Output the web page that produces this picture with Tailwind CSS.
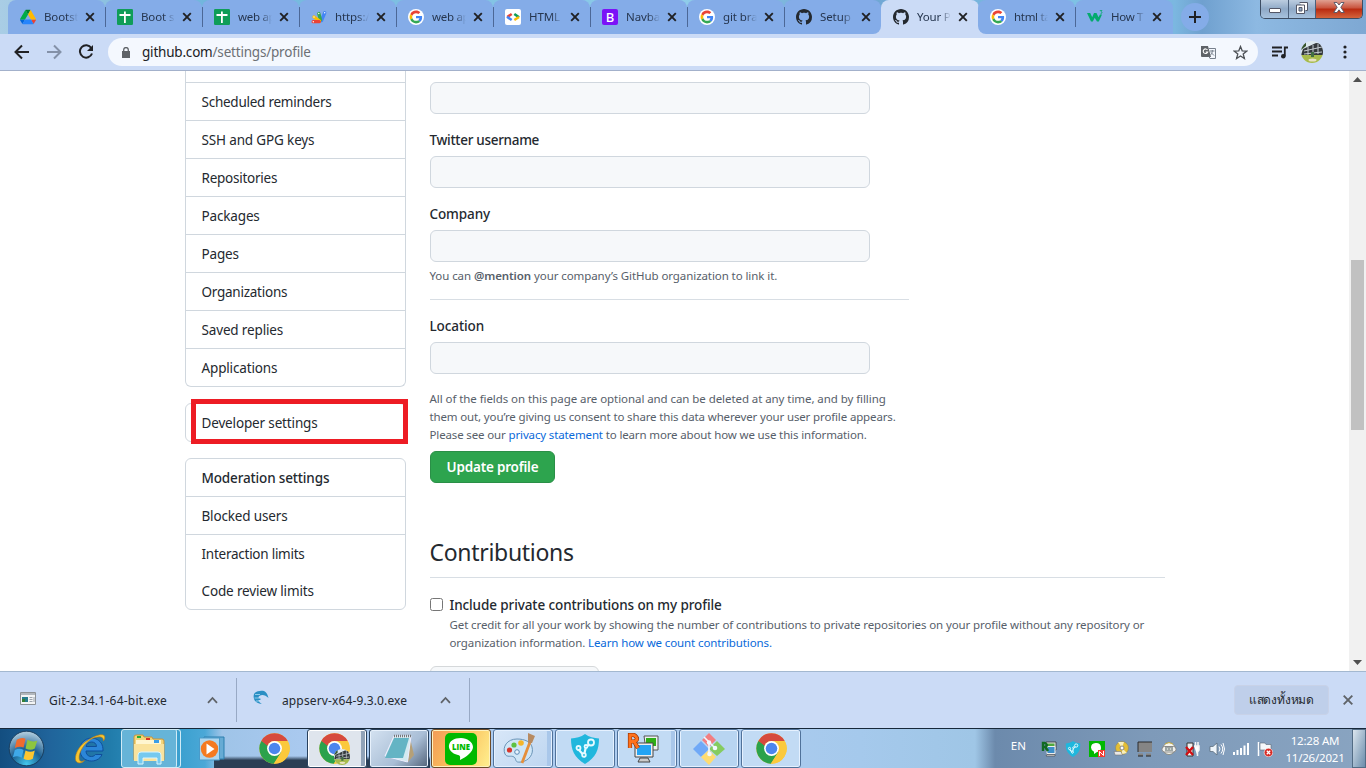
<!DOCTYPE html>
<html lang="en">
<head>
<meta charset="utf-8">
<title>Your Profile</title>
<script src="https://cdn.jsdelivr.net/npm/@tailwindcss/browser@4"></script>
</head>
<body class="w-[1366px] h-[768px] overflow-hidden flex flex-col bg-white font-['Noto_Sans','Open_Sans',sans-serif] text-[#24292f]">

<svg class="absolute size-0">
  <defs>
    <symbol id="x" viewBox="0 0 10 10"><path d="M1.2 1.2l7.6 7.6M8.8 1.2L1.200 8.8" stroke="#202124" stroke-width="1.9" fill="none"/></symbol>
    <symbol id="drive" viewBox="0 0 87.300 78"><path d="m6.600 66.850 3.850 6.650c.8 1.400 1.950 2.500 3.300 3.300l13.750-23.800h-27.500c0 1.550.4 3.100 1.200 4.500z" fill="#0066da"/><path d="m43.650 25-13.750-23.800c-1.350.8-2.500 1.900-3.300 3.300l-25.400 44a9 9 0 0 0-1.200 4.500h27.500z" fill="#00ac47"/><path d="m73.550 76.800c1.350-.8 2.500-1.900 3.300-3.300l1.600-2.750 7.650-13.250c.8-1.400 1.200-2.950 1.200-4.500h-27.500l5.850 11.500z" fill="#ea4335"/><path d="m43.650 25 13.750-23.800c-1.350-.8-2.900-1.200-4.500-1.200h-18.500c-1.600 0-3.150.45-4.500 1.200z" fill="#00832d"/><path d="m59.800 53h-32.300l-13.750 23.800c1.350.8 2.900 1.200 4.500 1.200h50.800c1.600 0 3.150-.45 4.500-1.200z" fill="#2684fc"/><path d="m73.400 26.500-12.700-22c-.8-1.400-1.950-2.500-3.300-3.300l-13.750 23.800 16.150 28h27.450c0-1.550-.4-3.100-1.200-4.500z" fill="#ffba00"/></symbol>
    <symbol id="sheet" viewBox="0 0 16 16"><rect width="16" height="16" rx="1.200" fill="#0f9d58"/><path d="M2.500 6h11M7.900 2.500v11.500" stroke="#fff" stroke-width="1.800"/></symbol>
    <symbol id="script" viewBox="0 0 16 16"><g stroke-linecap="round" stroke-width="3.300"><path d="M10.500 11.500L13.700 3.800" stroke="#4285f4"/><path d="M7.800 4.500L9.500 11" stroke="#34a853"/><path d="M3 8L8.500 12" stroke="#fbbc04"/><path d="M2.200 12.700h6" stroke="#ea4335"/></g><circle cx="2.300" cy="12.700" r=".7" fill="#fff"/><circle cx="3" cy="8" r=".7" fill="#fff"/><circle cx="7.800" cy="4.500" r=".7" fill="#fff"/><circle cx="13.700" cy="3.800" r=".7" fill="#fff"/></symbol>
    <symbol id="google" viewBox="-6 -6 60 60"><circle cx="24" cy="24" r="30" fill="#fff"/><path fill="#EA4335" d="M24 9.500c3.540 0 6.710 1.220 9.210 3.600l6.850-6.850C35.900 2.380 30.470 0 24 0 14.620 0 6.510 5.380 2.560 13.220l7.980 6.190C12.430 13.720 17.740 9.500 24 9.500z"/><path fill="#4285F4" d="M46.980 24.550c0-1.570-.15-3.090-.38-4.550H24v9.020h12.940c-.58 2.960-2.260 5.480-4.780 7.180l7.730 6c4.510-4.180 7.090-10.360 7.090-17.650z"/><path fill="#FBBC05" d="M10.530 28.590c-.48-1.450-.76-2.990-.76-4.590s.27-3.140.76-4.590l-7.980-6.190C.92 16.460 0 20.120 0 24c0 3.880.92 7.540 2.560 10.780l7.970-6.190z"/><path fill="#34A853" d="M24 48c6.480 0 11.930-2.130 15.890-5.810l-7.730-6c-2.150 1.450-4.920 2.300-8.160 2.300-6.260 0-11.570-4.220-13.470-9.910l-7.980 6.190C6.510 42.620 14.620 48 24 48z"/></symbol>
    <symbol id="code" viewBox="0 0 16 16"><rect width="16" height="16" rx="2" fill="#fff"/><g fill="none" stroke-width="2.600"><path d="M6.700 5L2.200 8" stroke="#ea4335"/><path d="M2 7.800L6.700 11" stroke="#4285f4"/><path d="M9.300 5L14 8.200" stroke="#0f9d58"/><path d="M14 8L9.300 11" stroke="#fbbc04"/></g></symbol>
    <symbol id="github" viewBox="0 0 16 16"><path fill="#24292f" d="M8 0C3.580 0 0 3.580 0 8c0 3.540 2.290 6.530 5.470 7.590.4.070.55-.17.55-.38 0-.19-.01-.82-.01-1.490-2.010.37-2.530-.49-2.690-.94-.09-.23-.48-.94-.82-1.130-.28-.15-.68-.52-.01-.53.63-.01 1.080.58 1.230.82.72 1.210 1.870.87 2.330.66.070-.52.280-.87.510-1.070-1.780-.2-3.640-.89-3.640-3.950 0-.87.310-1.590.820-2.150-.08-.2-.36-1.020.080-2.120 0 0 .67-.21 2.200.820.640-.18 1.320-.27 2-.27s1.360.09 2 .27c1.530-1.040 2.200-.82 2.200-.82.440 1.100.160 1.920.080 2.120.510.560.820 1.270.820 2.150 0 3.070-1.870 3.750-3.650 3.950.290.250.540.730.540 1.480 0 1.070-.01 1.930-.01 2.200 0 .210.150.460.550.380A8.010 8.010 0 0 0 16 8c0-4.420-3.580-8-8-8z"/></symbol>
    <symbol id="w3" viewBox="0 0 16 16"><path d="M0 4h3.200l2 4.300L7 4h2.500l2 4.300L13 5.500h2L11.800 12.500H10L7.700 8.800 5.800 12.500H4z" fill="#04aa6d"/><path d="M12.800 1.500h2.200l-1 1.200c1.500.2 1.300 2-.4 1.900" fill="none" stroke="#04aa6d" stroke-width=".8"/></symbol>
    <symbol id="chrome" viewBox="0 0 48 48"><circle cx="24" cy="24" r="23.500" fill="#fbc93c"/><path d="M3.600 12.300A23.500 23.500 0 0 0 23 47.500L34 30 24 24z" fill="#2ba24c"/><path d="M24 12.300h20.400A23.500 23.500 0 0 1 23 47.500L34.200 30z" fill="#fbc93c"/><path d="M3.600 12.300A23.500 23.500 0 0 1 44.400 12.300H24c-5 0-9 2.700-11 7.700z" fill="#d64a3e"/><path d="M3.600 12.300L13.900 30 24 24 13 20z" fill="#2ba24c"/><circle cx="24" cy="24" r="11.500" fill="#fff"/><circle cx="24" cy="24" r="9" fill="#4c86ee"/></symbol>
    <symbol id="school" viewBox="0 0 22 22"><rect width="22" height="22" fill="#dce8ee"/><path d="M0 9l5-4V0L0 2z" fill="#35532b"/><path d="M2 8l13-6 7 1v11H0z" fill="#34393c"/><path d="M3 10l18-4M3 13l18-2M7 6v8M12 4v9M17 3v10" stroke="#c4cbd0" stroke-width="1"/><path d="M0 14h22v8H0z" fill="#a7bb4b"/><path d="M10 11h3v5h-3z" fill="#426e42"/><ellipse cx="11.500" cy="19" rx="4" ry="1.500" fill="#e8e1c4"/></symbol>
    <symbol id="shield" viewBox="0 0 28 30"><path d="M14 0C10 3 5 4 0 4.500c0 11 3 19 14 25.500 11-6.500 14-14.500 14-25.500C23 4 18 3 14 0z" fill="#20b7dd"/><path d="M7 15l6 6.500 2-9 6-3" stroke="#e5faff" stroke-width="2.200" fill="none"/><g fill="#20b7dd" stroke="#e5faff" stroke-width="1.800"><circle cx="7.500" cy="14" r="2"/><circle cx="20" cy="8.500" r="3"/><circle cx="15" cy="12.500" r="1.500"/><circle cx="13" cy="21" r="1.800"/></g></symbol>
    <symbol id="rdp" viewBox="0 0 32 32"><path d="M17 4h14v14H19z" fill="#edf1f0" stroke="#555"/><path d="M19 6h10v8H19z" fill="#2fae17"/><path d="M8 11h18v14H8z" fill="#eee" stroke="#444"/><path d="M10 13h14v10H10z" fill="#24a4f4"/><path d="M13 26h8l2 4H11z" fill="#ccc" stroke="#444"/><path d="M3 16V3h4q6 4 0 6.500H4M7 9.500l4 6.500" stroke="#8d2c05" stroke-width="4.200" fill="none"/><path d="M3 16V3h4q6 4 0 6.500H4M7 9.500l4 6.500" stroke="#ff721c" stroke-width="3" fill="none"/></symbol>
  </defs>
</svg>

<!-- Tab strip -->
<header class="h-[34px] shrink-0 flex pl-2 bg-[linear-gradient(#cbdbf6,#cbdbf6),linear-gradient(90deg,#a9cde5_0,#71b6dd_15%,#8fcdea_50%,#6fa5d3_63%,#7fc4e6_80%,#7bb7e0_86%,#6fa0cf_88%,#8db9e2_92%,#7ea8d3_100%)] bg-[length:116px_10px,100%_100%] bg-[position:871px_24px,0_0] bg-no-repeat text-[11.5px] text-[#26364f] tracking-[-0.1px]">
  <div class="w-[97px] pl-3 pr-[10px] flex items-center bg-[#84ace8] rounded-t-lg"><svg class="size-4 shrink-0"><use href="#drive"/></svg><span class="ml-2 w-[34px] overflow-hidden whitespace-nowrap [mask-image:linear-gradient(90deg,#000_65%,transparent)]">Bootst</span><svg class="size-[10px] ml-auto"><use href="#x"/></svg></div>
  <div class="w-[97px] pl-3 pr-[10px] flex items-center bg-[#84ace8] rounded-t-lg bg-[linear-gradient(#4c6897,#4c6897)] bg-[length:1px_20px] bg-no-repeat bg-[position:0_7px]"><svg class="size-4 shrink-0"><use href="#sheet"/></svg><span class="ml-2 w-[34px] overflow-hidden whitespace-nowrap [mask-image:linear-gradient(90deg,#000_65%,transparent)]">Boot s</span><svg class="size-[10px] ml-auto"><use href="#x"/></svg></div>
  <div class="w-[97px] pl-3 pr-[10px] flex items-center bg-[#84ace8] rounded-t-lg bg-[linear-gradient(#4c6897,#4c6897)] bg-[length:1px_20px] bg-no-repeat bg-[position:0_7px]"><svg class="size-4 shrink-0"><use href="#sheet"/></svg><span class="ml-2 w-[34px] overflow-hidden whitespace-nowrap tracking-[-0.3px] [mask-image:linear-gradient(90deg,#000_65%,transparent)]">web ap</span><svg class="size-[10px] ml-auto"><use href="#x"/></svg></div>
  <div class="w-[97px] pl-3 pr-[10px] flex items-center bg-[#84ace8] rounded-t-lg bg-[linear-gradient(#4c6897,#4c6897)] bg-[length:1px_20px] bg-no-repeat bg-[position:0_7px]"><svg class="size-4 shrink-0"><use href="#script"/></svg><span class="ml-2 w-[34px] overflow-hidden whitespace-nowrap [mask-image:linear-gradient(90deg,#000_65%,transparent)]">https:/</span><svg class="size-[10px] ml-auto"><use href="#x"/></svg></div>
  <div class="w-[97px] pl-3 pr-[10px] flex items-center bg-[#84ace8] rounded-t-lg bg-[linear-gradient(#4c6897,#4c6897)] bg-[length:1px_20px] bg-no-repeat bg-[position:0_7px]"><svg class="size-4 shrink-0"><use href="#google"/></svg><span class="ml-2 w-[34px] overflow-hidden whitespace-nowrap tracking-[-0.3px] [mask-image:linear-gradient(90deg,#000_65%,transparent)]">web ap</span><svg class="size-[10px] ml-auto"><use href="#x"/></svg></div>
  <div class="w-[97px] pl-3 pr-[10px] flex items-center bg-[#84ace8] rounded-t-lg bg-[linear-gradient(#4c6897,#4c6897)] bg-[length:1px_20px] bg-no-repeat bg-[position:0_7px]"><svg class="size-4 shrink-0"><use href="#code"/></svg><span class="ml-2 w-[34px] overflow-hidden whitespace-nowrap [mask-image:linear-gradient(90deg,#000_65%,transparent)]">HTML</span><svg class="size-[10px] ml-auto"><use href="#x"/></svg></div>
  <div class="w-[97px] pl-3 pr-[10px] flex items-center bg-[#84ace8] rounded-t-lg bg-[linear-gradient(#4c6897,#4c6897)] bg-[length:1px_20px] bg-no-repeat bg-[position:0_7px]"><span class="size-4 shrink-0 rounded-[2px] bg-[#7b12f7] text-white text-[13px] leading-4 font-medium text-center">B</span><span class="ml-2 w-[34px] overflow-hidden whitespace-nowrap [mask-image:linear-gradient(90deg,#000_65%,transparent)]">Navba</span><svg class="size-[10px] ml-auto"><use href="#x"/></svg></div>
  <div class="w-[97px] pl-3 pr-[10px] flex items-center bg-[#84ace8] rounded-t-lg bg-[linear-gradient(#4c6897,#4c6897)] bg-[length:1px_20px] bg-no-repeat bg-[position:0_7px]"><svg class="size-4 shrink-0"><use href="#google"/></svg><span class="ml-2 w-[34px] overflow-hidden whitespace-nowrap [mask-image:linear-gradient(90deg,#000_65%,transparent)]">git bra</span><svg class="size-[10px] ml-auto"><use href="#x"/></svg></div>
  <div class="w-[97px] pl-3 pr-[10px] flex items-center bg-[#84ace8] rounded-t-lg rounded-br-lg bg-[linear-gradient(#4c6897,#4c6897)] bg-[length:1px_20px] bg-no-repeat bg-[position:0_7px]"><svg class="size-4 shrink-0"><use href="#github"/></svg><span class="ml-2 w-[34px] overflow-hidden whitespace-nowrap [mask-image:linear-gradient(90deg,#000_65%,transparent)]">Setup</span><svg class="size-[10px] ml-auto"><use href="#x"/></svg></div>
  <div class="w-[98px] -mr-px pl-3 pr-[11px] flex items-center bg-[#cbdbf6] rounded-t-lg"><svg class="size-4 shrink-0"><use href="#github"/></svg><span class="ml-2 w-[34px] overflow-hidden whitespace-nowrap tracking-[-0.2px] [mask-image:linear-gradient(90deg,#000_65%,transparent)]">Your P</span><svg class="size-[10px] ml-auto"><use href="#x"/></svg></div>
  <div class="w-[97px] pl-3 pr-[10px] flex items-center bg-[#84ace8] rounded-t-lg rounded-bl-lg"><svg class="size-4 shrink-0"><use href="#google"/></svg><span class="ml-2 w-[34px] overflow-hidden whitespace-nowrap tracking-[-0.3px] [mask-image:linear-gradient(90deg,#000_65%,transparent)]">html ta</span><svg class="size-[10px] ml-auto"><use href="#x"/></svg></div>
  <div class="w-[98px] pl-3 pr-[11px] flex items-center bg-[#84ace8] rounded-t-lg bg-[linear-gradient(#4c6897,#4c6897)] bg-[length:1px_20px] bg-no-repeat bg-[position:0_7px]"><svg class="size-4 shrink-0"><use href="#w3"/></svg><span class="ml-2 w-[34px] overflow-hidden whitespace-nowrap tracking-[-0.3px] [mask-image:linear-gradient(90deg,#000_65%,transparent)]">How T</span><svg class="size-[10px] ml-auto"><use href="#x"/></svg></div>
  <div class="ml-2 mt-[3px] size-7 rounded-full bg-[#84ace8] flex items-center justify-center"><svg class="size-3" viewBox="0 0 12 12"><path d="M6 0v12M0 6h12" stroke="#202124" stroke-width="2"/></svg></div>
  <div class="ml-auto mr-[3px] w-[103px] h-[19px] flex rounded-b-[5px] border border-t-0 border-[#3d4d63] overflow-hidden">
    <div class="w-7 flex justify-center items-end pb-[5px] border-r border-[#4b607c] bg-linear-to-b from-[#bccde0] via-[#8fa9c7] to-[#a7c2de]"><span class="w-3 h-[5px] bg-white border border-[#535666] rounded-[1px]"></span></div>
    <div class="w-[27px] flex justify-center items-center border-r border-[#4b607c] bg-linear-to-b from-[#bccde0] via-[#8fa9c7] to-[#a7c2de]"><svg class="size-3 -mt-[3px]" viewBox="0 0 12 12"><path d="M3.500.5h8v8h-2M.5 3h8v8.500h-8z" fill="#fff" stroke="#535666"/><path d="M3 5.500h3v3.500H3z" fill="#8fa9c7" stroke="#535666"/></svg></div>
    <div class="flex-1 flex justify-center items-center bg-[linear-gradient(#e0a091,#c9523c_45%,#b92a10_50%,#d4643c)]"><svg class="w-3 h-[11px] -mt-[3px]" viewBox="0 0 12 11"><path d="M1 .5h3l2 2.500 2-2.500h3L7.800 5.300 11.300 10.500H8L6 7.800 4 10.500H.7L4.200 5.300z" fill="#fff" stroke="#535666" stroke-width=".9"/></svg></div>
  </div>
</header>

<!-- Toolbar -->
<div class="relative h-[37px] shrink-0 bg-[#cbdbf6] border-b border-[#a3b1cb] flex items-center">
  <svg class="ml-[14px] size-4" viewBox="0 0 16 16"><path d="M15 8H2M8 1.500L1.500 8 8 14.500" fill="none" stroke="#202124" stroke-width="2"/></svg>
  <svg class="ml-4 size-4" viewBox="0 0 16 16"><path d="M1 8h13M8 1.500L14.500 8 8 14.500" fill="none" stroke="#8491a8" stroke-width="2"/></svg>
  <svg class="ml-4 size-4" viewBox="0 0 16 16"><path d="M13.300 4A6.200 6.200 0 1 0 14 9.500" fill="none" stroke="#202124" stroke-width="2"/><path d="M15 1v6H9z" fill="#202124"/></svg>
  <div class="ml-[14px] w-[1150px] h-7 rounded-full bg-[#f4f8fe] flex items-center pl-[14px] pr-[10px]">
    <svg class="w-2 h-[11px]" viewBox="0 0 8 11"><path d="M0 4h8v7H0z" fill="#5f6368"/><path d="M1.700 4.500V2.800a2.300 2.300 0 0 1 4.600 0v1.700" fill="none" stroke="#5f6368" stroke-width="1.300"/></svg>
    <span class="ml-3 text-[13.5px] text-[#202124] tracking-[-0.2px]">github.com<span class="text-[#6c7075]">/settings/profile</span></span>
    <svg class="ml-auto size-[15px]" viewBox="0 0 15 15"><path d="M0 1h7l3 11H1q-1 0-1-1z" fill="#5f6368"/><path d="M8 3.500h6.500v10H9l-1-2" fill="none" stroke="#77808c"/><path d="M6.500 5A2.300 2.300 0 1 0 6.700 7H4.700" fill="none" stroke="#fff" stroke-width="1.100"/><path d="M9 6h4.500M11.300 5v1c0 2-1 3-1.800 4M10 7.500l3 3" fill="none" stroke="#77808c"/></svg>
    <svg class="ml-[17px] size-[15px]" viewBox="0 0 15 15"><path d="M7.500 1.500l1.700 4.300 4.600.3-3.600 2.900 1.200 4.500-3.900-2.500-3.900 2.500 1.200-4.500L1.200 6.100l4.600-.3z" fill="none" stroke="#4d5156" stroke-width="1.300"/></svg>
  </div>
  <svg class="ml-[14px] w-[16px] h-[13px]" viewBox="0 0 16 13"><path d="M0 1.500h10M0 5.500h10M0 9.500h6M12.800 10V1.500H16" fill="none" stroke="#202124" stroke-width="1.800"/><circle cx="11.300" cy="10.300" r="2.300" fill="#202124"/></svg>
  <svg class="ml-[13px] size-[22px] rounded-full"><use href="#school"/></svg>
  <svg class="ml-[20px] w-1 h-[14px]" viewBox="0 0 4 14"><g fill="#202124"><circle cx="2" cy="2" r="1.600"/><circle cx="2" cy="7" r="1.600"/><circle cx="2" cy="12" r="1.600"/></g></svg>
</div>

<!-- Page viewport -->
<main class="h-[600px] shrink-0 flex overflow-hidden">
  <nav class="ml-[185px] w-[221px] text-[13.5px] leading-[38px] tracking-[-0.15px]">
    <div class="border border-t-0 border-[#d0d7de] rounded-b-md [&>p]:pl-[15.5px] [&>p]:h-[38px] [&>p]:border-t [&>p]:border-[#d0d7de] pt-[11px]">
      <p class="tracking-[-0.25px]">Scheduled reminders</p><p>SSH and GPG keys</p><p class="tracking-[-0.25px]">Repositories</p><p>Packages</p><p>Pages</p><p class="tracking-[-0.25px]">Organizations</p><p>Saved replies</p><p>Applications</p>
    </div>
    <div class="relative mt-4 h-[39px] border border-[#d0d7de] rounded-md pl-[15.5px]">Developer settings
      <span class="absolute -top-[5px] left-[5px] w-[217px] h-[45px] border-5 border-[#ed1c24]"></span>
    </div>
    <div class="mt-4 h-[152px] border border-[#d0d7de] rounded-md [&>p]:pl-[15.5px]">
      <p class="h-[38px] border-b border-[#d0d7de] font-medium">Moderation settings</p>
      <p class="h-[38px] border-b border-[#d0d7de]">Blocked users</p>
      <p class="h-[37px] tracking-[-0.25px]">Interaction limits</p>
      <p class="h-[37px]">Code review limits</p>
    </div>
  </nav>
  <section class="ml-6 w-[735px] pt-[11px] text-[13.5px] leading-[21px]">
    <div class="h-8 w-[440px] rounded-md border border-[#d0d7de] bg-[#f6f8fa]"></div>
    <p class="-ml-[0.5px] mt-4 mb-[5px] font-medium tracking-[-0.3px]">Twitter username</p>
    <div class="h-8 w-[440px] rounded-md border border-[#d0d7de] bg-[#f6f8fa]"></div>
    <p class="-ml-[0.5px] mt-4 mb-[5px] font-medium tracking-[-0.1px]">Company</p>
    <div class="h-8 w-[440px] rounded-md border border-[#d0d7de] bg-[#f6f8fa]"></div>
    <p class="-ml-[0.5px] mt-[5px] text-[11.5px] leading-[18px] tracking-[-0.08px] text-[#57606a]">You can <b class="font-semibold">@mention</b> your company’s GitHub organization to link it.</p>
    <div class="mt-[14px] w-[479px] h-px bg-[#d8dee4]"></div>
    <p class="-ml-[0.5px] mt-4 mb-[5px] font-medium tracking-[-0.1px]">Location</p>
    <div class="h-8 w-[440px] rounded-md border border-[#d0d7de] bg-[#f6f8fa]"></div>
    <p class="-ml-[0.5px] mt-4 text-[11.5px] leading-[18px] tracking-[-0.14px] text-[#57606a] whitespace-nowrap"><span class="tracking-[-0.07px]">All of the fields on this page are optional and can be deleted at any time, and by filling</span><br>them out, you’re giving us consent to share this data wherever your user profile appears.<br>Please see our <span class="text-[#0969da]">privacy statement</span> to learn more about how we use this information.</p>
    <button class="mt-[7px] block w-[125px] h-8 pt-px rounded-md border border-[#2a8f47] bg-[#2da44e] text-white font-semibold tracking-[-0.2px]">Update profile</button>
    <h2 class="-ml-[0.5px] mt-[51px] h-[44px] border-b border-[#d8dee4] text-[23px] leading-[36px] tracking-[-0.3px]">Contributions</h2>
    <div class="mt-[17px] flex">
      <span class="mt-[3px] size-[13px] shrink-0 border border-[#767676] rounded-[2.5px]"></span>
      <div class="ml-[6.5px]">
        <p class="font-medium tracking-[-0.1px]">Include private contributions on my profile</p>
        <p class="text-[11.5px] leading-[18px] tracking-[-0.11px] text-[#57606a] whitespace-nowrap">Get credit for all your work by showing the number of contributions to private repositories on your profile without any repository or<br>organization information. <span class="text-[#0969da]">Learn how we count contributions.</span></p>
      </div>
    </div>
    <div class="mt-[14px] h-8 w-[169px] rounded-md border border-[#d5d8da] bg-[#f6f8fa]"></div>
  </section>
  <div class="ml-auto w-[17px] bg-[#f1f1f1] flex flex-col items-center">
    <svg class="mt-[6px] w-[9px] h-[5px] shrink-0" viewBox="0 0 9 5"><path d="M0 5L4.500 0 9 5z" fill="#505050"/></svg>
    <div class="mt-[178px] w-[13px] h-[170px] shrink-0 bg-[#c1c1c1]"></div>
    <svg class="mt-auto mb-[6px] w-[9px] h-[5px] shrink-0" viewBox="0 0 9 5"><path d="M0 0L4.500 5 9 0z" fill="#505050"/></svg>
  </div>
</main>

<!-- Downloads shelf -->
<div class="h-[57px] shrink-0 border-t border-[#a3b8d0] bg-[#cbdbf6] flex items-center text-[12px]">
  <div class="w-[237px] h-11 border-r border-[#98a9c5] flex items-center pl-5 pr-[18px]">
    <svg class="w-4 h-[13px] mb-1" viewBox="0 0 16 13"><path d="M.5.5h15v12H.5z" fill="#f2f4f5" stroke="#8c9196"/><path d="M1 2h14" stroke="#b2b7bd" stroke-width="2"/><path d="M2 5h6v5H2z" fill="#267b8c"/><path d="M2 7h3v3H2z" fill="#367f35"/><path d="M9.500 5.500h3M9.500 7.500h3M9.500 9.500h3M14 5v5" stroke="#9ba2ad"/></svg>
    <span class="ml-[13px] mt-px whitespace-nowrap tracking-[0.25px]">Git-2.34.1-64-bit.exe</span>
    <svg class="ml-auto w-[11px] h-2" viewBox="0 0 11 8"><path d="M1 6.800L5.500 2 10 6.800" fill="none" stroke="#5f6368" stroke-width="1.800"/></svg>
  </div>
  <div class="w-[233px] h-11 border-r border-[#98a9c5] flex items-center pl-4 pr-[18px]">
    <svg class="size-4 mb-1" viewBox="0 0 16 16"><path d="M15.500 8C14 1 10 0 7 1 2 1 0 4 .8 8c.7 4 4 6 8 6-1-1-3-2-3.500-4 2 .3 3-.4 2-1.500-2 .5-2.500-1-1-2.500 3-2 6-1 9.200 2z" fill="#2a8fc4"/><path d="M2 4.500h5M1.500 8h4M3 11h3" stroke="#a8dcf3" stroke-width=".8"/></svg>
    <span class="ml-[13px] mt-px whitespace-nowrap tracking-[0.13px]">appserv-x64-9.3.0.exe</span>
    <svg class="ml-auto w-[11px] h-2" viewBox="0 0 11 8"><path d="M1 6.800L5.500 2 10 6.800" fill="none" stroke="#5f6368" stroke-width="1.800"/></svg>
  </div>
  <div class="ml-auto w-[95px] h-[30px] rounded bg-[#bfcfea] border border-[#c8d2e8] flex items-center justify-center whitespace-nowrap tracking-[-0.2px]">แสดงทั้งหมด</div>
  <svg class="ml-[14px] mr-[13px] size-[10px]" viewBox="0 0 10 10"><path d="M.7.7l8.600 8.600M9.300.7L.7 9.300" stroke="#5f6368" stroke-width="1.900"/></svg>
</div>

<!-- Taskbar -->
<footer class="relative h-10 shrink-0 border-t border-[#17283a] flex items-center bg-[linear-gradient(90deg,#134e80_0,#20649b_50px,#217cab_110px,#3ba0cf_180px,#4ba8d7_205px,#9fc4e8_222px,#a9c9ef_300px,#afcdf0_660px,#a5c9ec_860px,#9fc6e6_975px,#6c8aac_995px,#7e9ab9_1150px,#89a4c1_1366px)]">
  <div class="absolute left-[214px] bottom-0 w-[216px] h-[12px] bg-[linear-gradient(transparent,#2b3e54_35%)]"></div>
  <svg class="relative ml-2 size-[37px]" viewBox="0 0 38 38"><defs><radialGradient id="orb" cx=".5" cy=".95" r=".9"><stop stop-color="#42c8ee"/><stop offset=".5" stop-color="#1b5f91"/><stop offset="1" stop-color="#a9c7da"/></radialGradient></defs><circle cx="19" cy="19" r="17.800" fill="url(#orb)" stroke="#183c5c"/><path d="M9 10q5-3 9-1l-2 9q-4-2-9 .5z" fill="#ef6b2e"/><path d="M20 10q5 3 10 1l-2.500 8q-4 2.500-9.500 0z" fill="#8dc63f"/><path d="M7 20.500q5-2.500 9 0l-2 8q-4-3-9-.5z" fill="#3fa9e8"/><path d="M18 21q5 2.500 9.500 0l-2 8.500q-5 2.500-9.500 0z" fill="#fdc62f"/></svg>
  <svg class="relative ml-[29px] size-8" viewBox="0 0 32 32"><path d="M29 18H12c0 6 7 7 9.500 3.500H28c-4 10-22 8.500-22-4.500C6 1 30 1 29 18zM12 13.500h10.500c0-6-9.500-6-10.500 0z" fill="#2b86d8" stroke="#0f4f9b" fill-rule="evenodd"/><path d="M8 29.500C-3 33 1 16 11 9S29 0 30.500 3q1 2-1 5 0-5-6-4C13 5 3 20 5.500 27q1 2.500 5 .5z" fill="#f7c62f" stroke="#b87a14" stroke-width=".6"/></svg>
  <div class="relative ml-[15px] w-[60px] h-[39px] flex items-center justify-center rounded-[3px] border border-[#d0ebf6] bg-[#66b4d8] shadow-[inset_-4px_0_0_-1px_#3ba0cf,inset_-5px_0_0_-1px_#d0ebf6]"><svg class="mr-1 size-8" viewBox="0 0 32 32"><path d="M1 4q0-2 2-2h7l1 2h8l1 2h9q2 0 2 2v19H1z" fill="#f3d57a" stroke="#c9953a"/><path d="M3 7h25v5H3z" fill="#fff6d0"/><path d="M4 3h4v2H4z" fill="#27ae32"/><path d="M13 5h4v2h-4z" fill="#db3325"/><path d="M21 7h5v3h-5z" fill="#3a9ee8"/><path d="M1 11h30v17H1z" fill="#fae39d"/><path d="M5 31v-9q0-3 3-3h17q3 0 3 3v9h-4v-6H10v6z" fill="#75c9ef" stroke="#d9f5ff"/></svg></div>
  <svg class="relative ml-[18px] w-[26px] h-[26px]" viewBox="0 0 26 26"><path d="M5 1h20v22H5z" fill="#67abd4" stroke="#2c7eaf"/><path d="M.5 2h20v22H.5z" fill="#aed6ee" stroke="#4b9bc9"/><circle cx="10.500" cy="13" r="8.700" fill="#f47a20"/><path d="M7.500 7.500v11l8-5.500z" fill="#fff"/></svg>
  <svg class="relative ml-[34px] size-[31px]"><use href="#chrome"/></svg>
  <div class="relative ml-[17px] w-[60px] h-[39px] flex items-center rounded-[3px] border border-[#28415e] bg-[#dfe5ed] shadow-[inset_0_0_0_1px_#fff,inset_-5px_0_0_#91a3b8]"><svg class="ml-[11px] size-[31px]"><use href="#chrome"/></svg><svg class="absolute left-[26px] top-[19px] size-4 rounded-full" viewBox="0 0 22 22"><use href="#school"/></svg></div>
  <div class="relative ml-[2px] w-[60px] h-[39px] flex items-center justify-center rounded-[3px] border border-[#28415e] bg-[linear-gradient(135deg,#d4e2f1,#a9bed6_60%,#53647a)] shadow-[inset_0_0_0_1px_#e7f1fc]"><svg class="w-[31px] h-[29px]" viewBox="0 0 31 29"><path d="M26 4l4 17-6 7z" fill="#b5a077"/><path d="M10 2h17l-3.500 26L1 22z" fill="#d4eaf0" stroke="#eef"/><path d="M10 4h15l-6 20H1z" fill="#64b4c4"/><path d="M10 2h17" stroke="#777" stroke-width="2.500" stroke-dasharray="1 1"/></svg></div>
  <div class="relative ml-[2px] w-[60px] h-[39px] flex items-center justify-center rounded-[3px] border border-[#6d4b27] bg-[linear-gradient(115deg,#f29a58,#fac05c_45%,#fff08f)] shadow-[inset_0_0_0_1px_#fff2be]"><svg class="size-8" viewBox="0 0 32 32"><rect width="32" height="32" rx="5" fill="#00b900"/><path d="M16 5c-15 0-16 14-3 17 3 .5 2 3 2 5 6-3 13-8 13-13S22 5 16 5z" fill="#fff"/><text x="16" y="17" text-anchor="middle" font-size="7.800" font-weight="800" font-family="Open Sans" fill="#00b900">LINE</text></svg></div>
  <div class="relative ml-[2px] w-[60px] h-[39px] flex items-center rounded-[3px] border border-[#50729a] bg-[linear-gradient(135deg,#d8e7f8,#bdd5f0)] shadow-[inset_0_0_0_1px_#e5f1ff,inset_-5px_0_0_#a9c7ea]"><svg class="ml-[9px] size-8" viewBox="0 0 32 32"><path d="M14 6C4 6-1 14 2 21c2 4 6 1 9 3s0 6 7 5c8-1 13-8 11-15-1-5-7-8-15-8z" fill="#cfe6f7" stroke="#6a94b7"/><circle cx="6.500" cy="17" r="2.600" fill="#d8372c"/><circle cx="11" cy="12" r="2.600" fill="#5ec143"/><circle cx="18" cy="10" r="2.800" fill="#f5b529"/><circle cx="14" cy="19" r="2.300" fill="#e8f4ff" stroke="#5b8ab5"/><path d="M27 9L19 30" stroke="#e58f3b" stroke-width="2.800"/><path d="M25 0l7 3-3 7h-4z" fill="#b78b62"/></svg></div>
  <div class="relative ml-[2px] w-[60px] h-[39px] flex items-center justify-center rounded-[3px] border border-[#50729a] bg-[#c2dbf4] shadow-[inset_0_0_0_1px_#e5f1ff]"><svg class="w-7 h-[30px]"><use href="#shield"/></svg></div>
  <div class="relative ml-[2px] w-[60px] h-[39px] flex items-center rounded-[3px] border border-[#50729a] bg-[#c2dbf4] shadow-[inset_0_0_0_1px_#e5f1ff,inset_-5px_0_0_#a9c7ea]"><svg class="ml-[9px] mb-[2px] size-8"><use href="#rdp"/></svg></div>
  <div class="relative ml-[2px] w-[60px] h-[39px] flex items-center justify-center rounded-[3px] border border-[#50729a] bg-[#b8d5f1] shadow-[inset_0_0_0_1px_#e5f1ff]"><svg class="size-8" viewBox="0 0 32 32"><path d="M16 0l7 7-7 7-7-7z" fill="#f27f82"/><path d="M24 8l8 8-8 7-8-7z" fill="#85cc60"/><path d="M8 8l8 8-8 8-8-8z" fill="#70a9f7"/><path d="M16 17l7 7-7 8-8-8z" fill="#ffdc71"/><path d="M11 4l5 5v12M16 9l6 6" stroke="#f2f8ff" stroke-width="1.600" fill="none"/><circle cx="16.500" cy="21" r="2.300" fill="#f2f8ff"/><circle cx="22" cy="15" r="2.300" fill="#f2f8ff"/><circle cx="16" cy="9.500" r="2.200" fill="#f2f8ff"/></svg></div>
  <div class="relative ml-[2px] w-[60px] h-[39px] flex items-center justify-center rounded-[3px] border border-[#50729a] bg-[#c2dbf4] shadow-[inset_0_0_0_1px_#e5f1ff]"><svg class="size-[31px]"><use href="#chrome"/></svg></div>

  <div class="ml-auto flex items-center text-white text-[12px]">
    <span class="text-[11.500px] mb-[6px] mr-[15px]">EN</span>
    <div class="flex items-center gap-2">
      <svg class="size-4" viewBox="0 0 16 16"><path d="M5 1h10v8H5z" fill="#dfe5e4" stroke="#333" stroke-width=".8"/><path d="M6.500 2.500h7V8h-7z" fill="#4fa83e"/><path d="M6 5.500h8v7H6z" fill="#3e8fc9" stroke="#eee"/><path d="M6 13.500h8V15H5z" fill="#ddd" stroke="#444" stroke-width=".6"/><path d="M2 10V2h2q4 2 0 4H2M4.500 6L7 10" fill="none" stroke="#116a23" stroke-width="2.400"/></svg>
      <svg class="size-4" viewBox="0 0 28 30"><use href="#shield"/></svg>
      <svg class="size-4" viewBox="0 0 16 16"><path d="M0 0h16v16H0z" fill="#00b900"/><path d="M2 6.500a5 4.500 0 1 1 6 4.400L5 13v-2.200A5 5 0 0 1 2 6.500z" fill="#fff"/><path d="M9 9h7v7H9z" fill="#f33b32"/><path d="M10.500 15v-4.500l4 4V10" fill="none" stroke="#fff"/></svg>
      <svg class="size-4" viewBox="0 0 16 16"><circle cx="9" cy="7" r="6.500" fill="#e4be35" stroke="#8f8760" stroke-width=".6"/><path d="M9 7L5 1h6zM9 7l5 5-5 1z" fill="#f8efbd"/><circle cx="9" cy="7" r="2" fill="#fff" stroke="#888"/><path d="M1 10.500h7l1.500 3.500H2z" fill="#e8e8e8" stroke="#777" stroke-width=".6"/></svg>
      <svg class="size-4" viewBox="0 0 16 16"><path d="M1 1h14v10H1z" fill="#858585"/><path d="M1 11V1h14" fill="none" stroke="#222" stroke-width=".9"/><path d="M1 12.500h5v2.500H1zM9 12.500h5v2.500H9z" fill="#858585"/><path d="M1 15h5M9 15h5" stroke="#222"/></svg>
      <svg class="size-4" viewBox="0 0 16 16"><circle cx="8" cy="7.500" r="6" fill="#f6f6ef" stroke="#8b8b80"/><rect x="1" y="5.500" width="14" height="5.500" rx="2.500" fill="#f1f1ee" stroke="#888"/><path d="M4 6h8v4H4z" fill="#9da6a4"/><path d="M6 8h1M9 8h1" stroke="#fff"/><path d="M4 3q4-3 8 0" stroke="#c9b24e" fill="none"/></svg>
      <svg class="size-4" viewBox="0 0 16 16"><path d="M2 2h6v13H2z" fill="#eee" stroke="#333"/><path d="M9 5h5v4l-1.500 2v4M10.500 5V1M13 5V1" fill="#fff" stroke="#f5f5f5" stroke-width="1.500"/><path d="M1 6l7 8M8 6l-7 8" stroke="#d40e12" stroke-width="2.300"/></svg>
      <svg class="size-4" viewBox="0 0 16 16"><path d="M1 5.500h3L8 2v12l-4-3.500H1z" fill="#eff5fa" stroke="#536474" stroke-width=".7"/><path d="M10 5.500q2 2.500 0 5M12 3.500q3.500 4.500 0 9M14 2q3 6 0 12" fill="none" stroke="#fff" stroke-width="1"/></svg>
      <svg class="size-4" viewBox="0 0 16 16"><path d="M0 11h2v3H0zM3.500 9h2v5h-2zM7 7h2v7H7zM10.500 4.500h2V14h-2zM14 2h2v12h-2z" fill="#fff"/></svg>
      <svg class="size-4" viewBox="0 0 16 16"><path d="M1.500 1v14" stroke="#fff" stroke-width="1.500"/><path d="M3 2h5l1 1.500h5v7H9L8 9H3z" fill="#f5f8fb" stroke="#5c6875" stroke-width=".6"/><circle cx="11.500" cy="11.500" r="4.300" fill="#d72b25" stroke="#fff" stroke-width=".6"/><path d="M9.800 9.800l3.400 3.400M13.200 9.800l-3.400 3.400" stroke="#fff" stroke-width="1.300"/></svg>
    </div>
    <div class="w-[79px] pl-[5px] text-center leading-[17px] text-[11.500px] tracking-[-0.2px]">12:28 AM<br>11/26/2021</div>
    <div class="w-[14px] h-[39px] border border-[#526c85] bg-linear-to-br from-[#dce6ef] to-[#6b8dab]"></div>
  </div>
</footer>
</body>
</html>
